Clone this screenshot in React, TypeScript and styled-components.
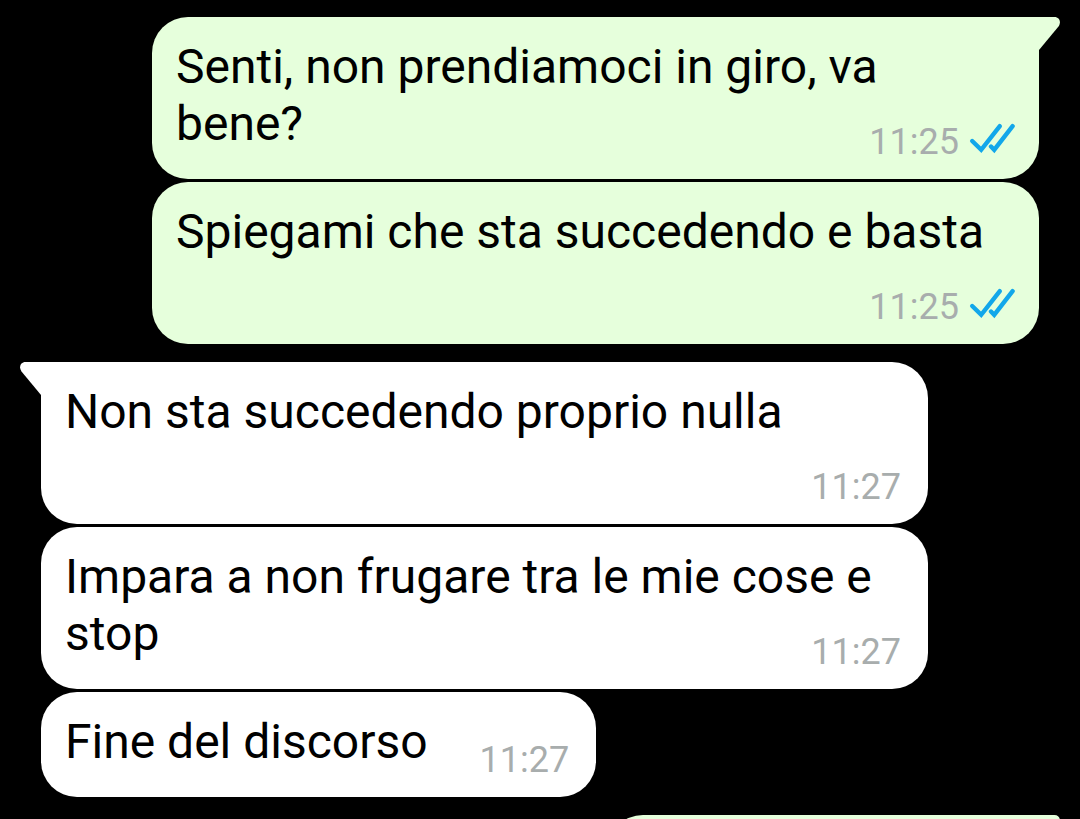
import React from "react";
import styled, { createGlobalStyle, css } from "styled-components";

const GlobalStyle = createGlobalStyle`
  *, *::before, *::after { box-sizing: border-box; }
  body { margin: 0; background: #000; font-family: Roboto, "Liberation Sans", sans-serif; }
`;

const colors = {
  sent: "#e6ffdc",
  received: "#ffffff",
  meta: "#a8adad",
  tick: "#12a7ea",
};

const Chat = styled.main`
  height: 100vh;
  overflow: hidden;
  padding: 17px 41px 0;
  background: #000;
`;

const Group = styled.section<{ $sent?: boolean }>`
  display: flex;
  flex-direction: column;
  align-items: ${(p) => (p.$sent ? "flex-end" : "flex-start")};
  gap: 3px;
  margin-bottom: 18px;
`;

const Bubble = styled.article<{ $sent?: boolean; $tail?: boolean }>`
  position: relative;
  display: flow-root;
  max-width: calc(100% - 111px);
  padding: 21px ${(p) => (p.$sent ? 24 : 27)}px 16px 24px;
  border-radius: 36px;
  background: ${(p) => (p.$sent ? colors.sent : colors.received)};
  color: #000;
  font-size: 48px;
  line-height: 57px;
  ${(p) =>
    p.$tail &&
    (p.$sent
      ? css`border-top-right-radius: 0;`
      : css`border-top-left-radius: 0;`)}
`;

const EmptyBubble = styled(Bubble)`
  width: 432px;
  min-height: 105px;
`;

const TailShape = styled.svg<{ $sent?: boolean }>`
  position: absolute;
  top: 0;
  ${(p) => (p.$sent ? "left: 100%;" : "right: 100%; transform: scaleX(-1);")}
  fill: ${(p) => (p.$sent ? colors.sent : colors.received)};
`;

const Meta = styled.span`
  float: right;
  display: flex;
  align-items: flex-end;
  gap: 10px;
  height: 68px;
  margin-left: 52px;
  color: ${colors.meta};
  font-size: 36px;
  line-height: 42px;
`;

const Ticks = styled.svg`
  margin-bottom: 9px;
  fill: none;
  stroke: ${colors.tick};
  stroke-width: 4.4;
  stroke-linecap: round;
`;

function Tail({ sent }: { sent?: boolean }) {
  return (
    <TailShape $sent={sent} width="21" height="33" viewBox="0 0 21 33" aria-hidden="true">
      <path d="M0 0H15.5C20.5 0 22.5 5 19.5 9.5L0 33Z" />
    </TailShape>
  );
}

function ReadTicks() {
  return (
    <Ticks width="46" height="31" viewBox="0 0 46 31" role="img" aria-label="Letto">
      <path d="M3.2 18L12.2 26.8L30.8 3.2" />
      <path d="M22 23.5L25.2 26.8L43.6 3.2" />
    </Ticks>
  );
}

type MessageProps = { text: string; time: string; sent?: boolean; tail?: boolean };

function Message({ text, time, sent, tail }: MessageProps) {
  return (
    <Bubble $sent={sent} $tail={tail}>
      {tail && <Tail sent={sent} />}
      <span>{text}</span>
      <Meta>
        <time>{time}</time>
        {sent && <ReadTicks />}
      </Meta>
    </Bubble>
  );
}

export default function App() {
  return (
    <>
      <GlobalStyle />
      <Chat lang="it">
        <Group $sent>
          <Message sent tail text="Senti, non prendiamoci in giro, va bene?" time="11:25" />
          <Message sent text="Spiegami che sta succedendo e basta" time="11:25" />
        </Group>
        <Group>
          <Message tail text="Non sta succedendo proprio nulla" time="11:27" />
          <Message text="Impara a non frugare tra le mie cose e stop" time="11:27" />
          <Message text="Fine del discorso" time="11:27" />
        </Group>
        <Group $sent>
          <EmptyBubble $sent $tail>
            <Tail sent />
          </EmptyBubble>
        </Group>
      </Chat>
    </>
  );
}
